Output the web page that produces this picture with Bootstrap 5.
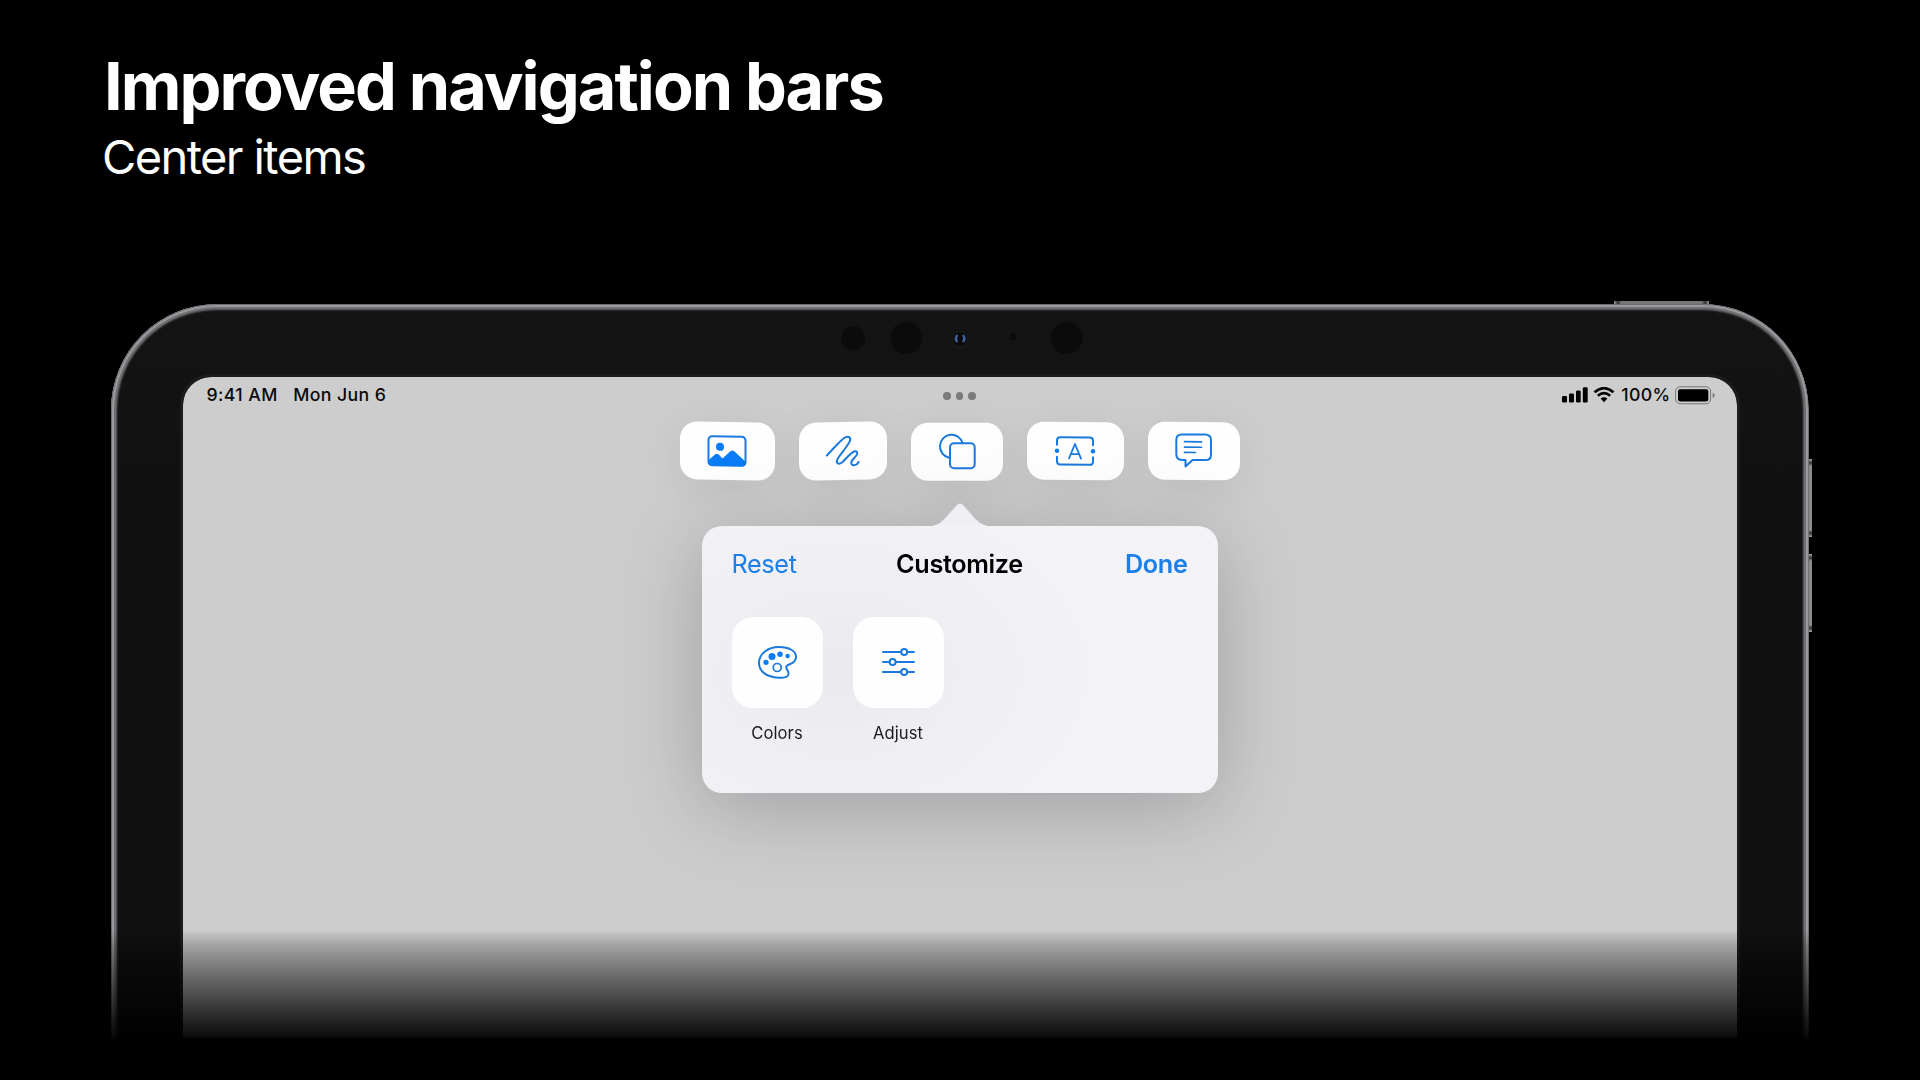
<!DOCTYPE html>
<html lang="en">
<head>
<meta charset="utf-8">
<meta name="viewport" content="width=device-width, initial-scale=1">
<title>Improved navigation bars</title>
<link href="https://cdn.jsdelivr.net/npm/bootstrap@5.3.0/dist/css/bootstrap.min.css" rel="stylesheet">
<style>
  body { background: #000; font-family: Inter, "Liberation Sans", sans-serif; font-kerning: normal; }
  .slide { width: 1920px; height: 1080px; }
  .slide-head { height: 304px; padding: 46px 0 0 102px; }
  .slide-title { font-size: 66.5px; line-height: 80px; font-weight: 700; letter-spacing: -1.95px; padding-left: 2px; }
  .slide-sub { font-size: 47px; line-height: 58px; letter-spacing: -1.6px; padding-top: 2px; }

  /* Tablet body */
  .tablet { width: 1698px; height: 736px; margin-left: 110.5px; }
  .tablet-body { border-radius: 106px 106px 0 0; padding: 0 72px;
    background: linear-gradient(#141414, #101010 30%);
    clip-path: inset(0 0 0 0 round 106px 106px 0 0); position: relative; }
  .tablet-body::after { content: ""; position: absolute; inset: 0 0 -20px; border-radius: 106px 106px 0 0; pointer-events: none;
    box-shadow: inset 0 0 0 1px #6d6c6f, inset 0 0 0 3px #9b999d, inset 0 0 0 5px #6f6f71, inset 0 0 0 6px #4e4f50, inset 0 0 1px 7px #2c2d2e; }
  .sensor-strip { height: 73px; padding-top: 4px; }
  .tablet-screen { background: #cdcdcd; border-radius: 28px 28px 0 0; outline: 3px solid #1c1c1c; overflow: hidden; }
  .fade-out { position: absolute; left: 0; right: -6px; bottom: 0; height: 110px; z-index: 5;
    background: linear-gradient(rgba(0,0,0,0), rgba(0,0,0,.2) 13%, rgba(0,0,0,.42) 35%, rgba(0,0,0,.66) 63%, rgba(0,0,0,.85) 85%, rgba(0,0,0,.93) 96%, #000 100%); }
  .hw-top { position: absolute; left: 1503px; top: -3px; width: 95px; height: 3px; background: linear-gradient(90deg,#999,#333 4%,#777 8%,#777 92%,#333 96%,#999); }
  .hw-side { position: absolute; left: 1698px; width: 3.5px; height: 78px; background: linear-gradient(#aaa,#333 5%,#8b8b8d 9%,#8b8b8d 91%,#333 95%,#aaa); }
  .hw-up { top: 155px; } .hw-down { top: 250px; }

  /* Status bar */
  .status-bar { height: 37px; padding: 0 21px 0 24px; font-size: 17.7px; font-weight: 500; color: #0a0a0a; letter-spacing: .4px; }
  .status-side { width: 300px; }
  .status-start { width: 297px; gap: 15.5px; }
  .grab-dots { gap: 4.7px; padding-top: 1px; }
  .grab-dots i { width: 7.6px; height: 7.6px; border-radius: 50%; background: #7b7b7b; }

  /* Navigation bar buttons */
  .nav-tools { padding-top: 8.2px; height: 88.6px; }
  .tool-btn { background: #fefefe; border: 0; border-radius: 17px; height: 57.5px; box-shadow: 0 8px 44px rgba(0,0,0,.08); }
  .tool-btn:hover { background: #fff; }
  .w-a { width: 94.5px; transform: skewY(1deg); }
  .w-b { width: 88px; margin-left: 24.5px; transform: skewY(-1deg); }
  .w-c { width: 92.5px; margin-left: 24px; transform: translateY(.7px); }
  .w-d { width: 96.5px; margin-left: 24px; transform: skewY(.6deg); }
  .w-e { width: 91.5px; margin-left: 24.5px; transform: skewY(.5deg); }
  .ico { fill: none; stroke: #1a79dc; stroke-width: 2; stroke-linecap: round; stroke-linejoin: round; display: block; flex: none; overflow: visible; }
  .ico .solid { fill: #0a7cf5; stroke: none; }

  /* Popover */
  .pop-wrap { width: 516px; filter: drop-shadow(0 14px 40px rgba(0,0,12,.22)); }
  .pop-tip { display: block; height: 24px; width: 76px; margin-bottom: -.5px; }
  .pop-card { --bs-card-bg: #f2f2f7; width: 516px; height: 266.5px; border: 0; border-radius: 20px; padding: 19px 30px 0; }
  .pop-shade { background: radial-gradient(ellipse 270px 190px at 26% 55%, #e9e9ee, #eeeef3 45%, #f2f2f7 100%); }
  .pop-bar { height: 38px; font-size: 25.2px; line-height: 38px; letter-spacing: -.33px; }
  .pop-link { color: #1a7fe8; text-decoration: none; }
  .pop-side { width: 120px; }
  .tile-list { gap: 30px; margin-top: 33.5px; }
  .tile-item { width: 91px; }
  .tile-face { width: 91px; height: 91px; border-radius: 21px; background: #fefefe; }
  .tile-label { font-size: 16.6px; line-height: 24px; margin-top: 13px; color: #1c1c1e; letter-spacing: .1px; }
</style>
<script src="https://cdn.jsdelivr.net/npm/bootstrap@5.3.0/dist/js/bootstrap.bundle.min.js"></script>
</head>
<body>
<main class="slide d-flex flex-column overflow-hidden">
  <header class="slide-head text-white flex-shrink-0">
    <h1 class="slide-title m-0 text-nowrap">Improved navigation bars</h1>
    <p class="slide-sub m-0 text-nowrap">Center items</p>
  </header>

  <section class="tablet position-relative flex-shrink-0">
    <span class="hw-top"></span><span class="hw-side hw-up"></span><span class="hw-side hw-down"></span>
    <div class="tablet-body h-100 d-flex flex-column">
      <div class="sensor-strip d-flex justify-content-center flex-shrink-0">
        <svg width="300" height="60" viewBox="810 308 300 60" fill="#0b0b0b">
          <circle cx="853.3" cy="338" r="12"/><circle cx="906.3" cy="338" r="16"/>
          <circle cx="1013" cy="337" r="3.5"/><circle cx="1066.5" cy="338" r="16"/>
          <circle cx="960" cy="339" r="7.5" stroke="#1c1c1c"/>
          <path d="M957.5 335q-3.400 3.500 0 7M962.800 335q3.400 3.500 0 7" fill="none" stroke="#3f669e" stroke-width="2.300"/>
        </svg>
      </div>
      <div class="tablet-screen flex-grow-1 d-flex flex-column align-items-center">
        <div class="status-bar w-100 d-flex align-items-center justify-content-between">
          <div class="status-start d-flex"><span>9:41 AM</span><span>Mon Jun 6</span></div>
          <div class="grab-dots d-flex"><i></i><i></i><i></i></div>
          <div class="status-side d-flex align-items-center justify-content-end">
            <svg width="26" height="16" viewBox="0 0 26 16"><rect y="9" width="5" height="6.500" rx="1.300"/><rect x="7" y="6.500" width="5" height="9" rx="1.300"/><rect x="14" y="3.500" width="4.700" height="12" rx="1.300"/><rect x="20.800" y=".3" width="4.900" height="15.200" rx="1.300"/></svg>
            <svg style="margin-left:5.5px;margin-right:6px" width="22" height="16" viewBox="0 0 22 16"><g fill="none" stroke="#000" stroke-width="2.700"><path d="M1.500 5.200Q11-2.800 20.500 5.200"/><path d="M4.800 8.800Q11 3.600 17.200 8.800"/></g><path d="M7.600 11.600Q11 8.900 14.400 11.600L11 15.200z"/></svg>
            <span>100%</span>
            <svg style="margin-left:4px" width="41" height="19" viewBox="0 0 41 19"><rect x=".6" y=".8" width="35" height="17" rx="4.500" fill="none" stroke="#777"/><rect x="3" y="3.200" width="30.300" height="12.200" rx="2"/><path d="M37.700 6.700q2 .5 2 2.600t-2 2.600z" fill="#777"/></svg>
          </div>
        </div>

        <nav class="nav-tools d-flex align-items-start" aria-label="Tools">
          <button class="tool-btn btn p-0 w-a d-flex align-items-center justify-content-center" aria-label="Image">
            <svg class="ico" width="40" height="32" viewBox="0 0 40 32"><rect x="1.500" y="1.500" width="37" height="29" rx="3.500"/><circle class="solid" cx="13" cy="12" r="4"/><path class="solid" d="M2 25L8.200 19.500Q10.200 18.200 12 20l3.400 3.600 8-7.300Q25.500 14.600 27.600 16.300L38.500 26.500V28q0 3-3 3H4.500q-3 0-3-3z"/></svg>
          </button>
          <button class="tool-btn btn p-0 w-b d-flex align-items-center justify-content-center" aria-label="Draw">
            <svg class="ico" width="36" height="32" viewBox="0 0 36 32"><path d="M1.700 20.300C8 14 16 4.500 20.500 2.200C24 .8 26.500 3 24.500 7C21 13.500 15.500 18.500 12.500 24C10.500 28 13.500 30 17 27.500C21 24 25 18.500 29 16.700C32 15.800 33.200 18 31.500 20.500C29.500 23.200 27.500 24.500 26.400 27C25.200 31.500 31.500 31.500 33.700 27.200"/></svg>
          </button>
          <button class="tool-btn btn p-0 w-c d-flex align-items-center justify-content-center" aria-label="Shapes">
            <svg class="ico" width="38" height="37" viewBox="0 0 38 37"><path d="M11 25A11.600 11.600 0 1 1 24.700 10.500"/><rect x="12" y="10.500" width="24.700" height="25" rx="4"/></svg>
          </button>
          <button class="tool-btn btn p-0 w-d d-flex align-items-center justify-content-center" aria-label="Text box">
            <svg class="ico" width="40" height="30" viewBox="0 0 40 30"><path d="M2 9V4.500Q2 1.300 5.200 1.300H34.800Q38 1.300 38 4.500V9M2 21v4.500Q2 28.700 5.200 28.700H34.800Q38 28.700 38 25.500V21"/><path d="M14 22.500L20 8l6 14.500M16 18h8" stroke-width="1.800"/><circle class="solid" cx="2" cy="15" r="2.200"/><circle class="solid" cx="38" cy="15" r="2.200"/></svg>
          </button>
          <button class="tool-btn btn p-0 w-e d-flex align-items-center justify-content-center" aria-label="Comment">
            <svg class="ico" width="37" height="35" viewBox="0 0 37 35"><path d="M7 1.500H30Q36 1.500 36 7V21.500Q36 27 30 27H17.500L10.500 33.500V27H7Q1.300 27 1.300 21.500V7Q1.300 1.500 7 1.500z"/><path d="M9.500 8.800H26.500M9.500 14.200H26.500M9.500 19.500H20.500" stroke-width="1.700"/></svg>
          </button>
        </nav>

        <div class="pop-wrap d-flex flex-column align-items-center">
          <svg class="pop-tip" viewBox="0 0 76 24"><path d="M1 24C19 23.500 21 17.500 34.500 2.500Q38-1.500 41.500 2.500C55 17.500 57 23.500 75 24z" fill="#f0f0f4"/></svg>
          <div class="card pop-card pop-shade">
            <div class="pop-bar d-flex justify-content-between">
              <a class="pop-link pop-side" href="#">Reset</a>
              <span class="fw-semibold text-black">Customize</span>
              <a class="pop-link pop-side fw-semibold text-end" href="#">Done</a>
            </div>
            <div class="tile-list d-flex">
              <div class="tile-item text-center">
                <div class="tile-face d-flex align-items-center justify-content-center">
                  <svg class="ico" width="41" height="34" viewBox="0 0 41 34"><path d="M22 2C32 2 39.200 6 39 12C38.800 20 29.500 18.500 29.200 22C29 24.500 32.500 26.500 31.500 29.500C30.500 32.500 26 33 21.500 32.700C9 32 2 26 2 18C2 8.500 11 2 22 2z"/><circle class="solid" cx="9" cy="17.300" r="2.600"/><circle class="solid" cx="15" cy="11.500" r="3.500"/><circle class="solid" cx="23" cy="9.300" r="2.700"/><circle class="solid" cx="30.600" cy="11" r="2.200"/><circle cx="20.200" cy="22.500" r="4" stroke-width="1.700"/></svg>
                </div>
                <div class="tile-label">Colors</div>
              </div>
              <div class="tile-item text-center">
                <div class="tile-face d-flex align-items-center justify-content-center">
                  <svg class="ico" width="33" height="28" viewBox="0 0 33 28"><path d="M1 4H18.800M25.500 4H32M1 14H7.300M14 14H32M1 24H18.800M25.500 24H32"/><circle cx="22.200" cy="4" r="3"/><circle cx="10.600" cy="14" r="3"/><circle cx="22.200" cy="24" r="3"/></svg>
                </div>
                <div class="tile-label">Adjust</div>
              </div>
            </div>
          </div>
        </div>
      </div>
    </div>
    <div class="fade-out"></div>
  </section>
</main>
</body>
</html>
